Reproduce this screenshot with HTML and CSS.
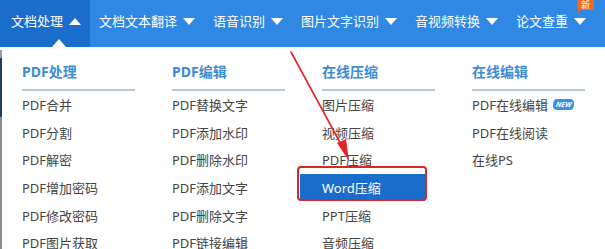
FILE: index.html
```html
<!DOCTYPE html>
<html lang="zh-CN">
<head>
<meta charset="utf-8">
<title>文档处理</title>
<link rel="stylesheet" href="styles.css">
</head>
<body>
<div class="page">
  <nav class="nav">
    <div class="nav-item active">文档处理<span class="caret up"></span><span class="pointer"></span></div>
    <div class="nav-item">文档文本翻译<span class="caret"></span></div>
    <div class="nav-item">语音识别<span class="caret"></span></div>
    <div class="nav-item">图片文字识别<span class="caret"></span></div>
    <div class="nav-item">音视频转换<span class="caret"></span></div>
    <div class="nav-item last">论文查重<span class="caret"></span><span class="badge-new">新</span></div>
  </nav>
  <div class="panel">
    <div class="col">
      <div class="col-title">PDF处理</div>
      <div class="item">PDF合并</div>
      <div class="item">PDF分割</div>
      <div class="item">PDF解密</div>
      <div class="item">PDF增加密码</div>
      <div class="item">PDF修改密码</div>
      <div class="item">PDF图片获取</div>
    </div>
    <div class="col">
      <div class="col-title">PDF编辑</div>
      <div class="item">PDF替换文字</div>
      <div class="item">PDF添加水印</div>
      <div class="item">PDF删除水印</div>
      <div class="item">PDF添加文字</div>
      <div class="item">PDF删除文字</div>
      <div class="item">PDF链接编辑</div>
    </div>
    <div class="col">
      <div class="col-title">在线压缩</div>
      <div class="item">图片压缩</div>
      <div class="item">视频压缩</div>
      <div class="item">PDF压缩</div>
      <div class="item selected">Word压缩</div>
      <div class="item">PPT压缩</div>
      <div class="item">音频压缩</div>
    </div>
    <div class="col">
      <div class="col-title">在线编辑</div>
      <div class="item">PDF在线编辑<span class="tag-new">NEW</span></div>
      <div class="item">PDF在线阅读</div>
      <div class="item">在线PS</div>
    </div>
    <div class="mark-box"></div>
    <svg class="mark-arrow" width="605" height="249" viewBox="0 0 605 249">
      <line x1="291" y1="52" x2="343" y2="148" stroke="#e0262a" stroke-width="1.6" stroke-linecap="round"/>
      <polygon points="349,161 337,143 346,139" fill="#e0262a"/>
    </svg>
  </div>
</div>
</body>
</html>
```

FILE: styles.css
```css
* { box-sizing: border-box; }
html, body { margin: 0; padding: 0; }
body {
  width: 605px;
  height: 249px;
  overflow: hidden;
  background: #ffffff;
  font-family: "Noto Sans", "Noto Sans CJK SC", sans-serif;
  font-size: 13px;
  color: #444444;
}
.page { position: relative; width: 605px; height: 249px; }

.nav {
  display: flex;
  height: 47px;
  background: #2e88e4;
  color: #ffffff;
}
.nav-item {
  position: relative;
  display: flex;
  align-items: center;
  height: 42px;
  padding: 0 9px;
  line-height: 42px;
  white-space: nowrap;
}
.nav-item.active {
  height: 47px;
  padding-left: 11px;
  padding-bottom: 5px;
  background: #1b6dcc;
}
.caret {
  display: block;
  width: 0;
  height: 0;
  margin-left: 6px;
  border-left: 6.5px solid transparent;
  border-right: 6.5px solid transparent;
  border-top: 7px solid #ffffff;
}
.caret.up {
  border-top: 0;
  border-bottom: 7px solid #ffffff;
}
.pointer {
  position: absolute;
  left: 52px;
  bottom: 0;
  width: 0;
  height: 0;
  border-left: 7px solid transparent;
  border-right: 7px solid transparent;
  border-bottom: 8px solid #ffffff;
}
.badge-new {
  position: absolute;
  top: -1px;
  right: 1px;
  width: 17px;
  height: 11px;
  border-radius: 2px;
  background: #f2691f;
  color: #ffffff;
  font-size: 9px;
  line-height: 11px;
  text-align: center;
}
.badge-new::after {
  content: "";
  position: absolute;
  left: 1px;
  bottom: -3px;
  border-left: 3px solid #f2691f;
  border-right: 2px solid transparent;
  border-bottom: 3px solid transparent;
}

.panel {
  position: relative;
  display: grid;
  grid-template-columns: 150px 150px 150px 150px;
  height: 202px;
  padding-top: 15px;
  background:
    linear-gradient(to bottom, #f2f7fc 0, #ffffff 3px) no-repeat 0 0 / 100% 3px,
    linear-gradient(to bottom, #9a9a9a 0 11px, #1d3d63 11px 70px, #8c8c8c 70px) no-repeat 0 0 / 2px 100%,
    #ffffff;
}
.col { display: flex; flex-direction: column; }
.col-title {
  width: 113px;
  margin-left: 22px;
  height: 29px;
  padding-bottom: 7px;
  line-height: 20px;
  font-size: 14px;
  font-weight: 700;
  color: #3d8cd2;
  border-bottom: 2px solid #b3c9dd;
}
.item {
  display: flex;
  align-items: center;
  width: 125px;
  height: 27.6px;
  padding-left: 22px;
  white-space: nowrap;
}
.item.selected {
  background: #1b6dcc;
  color: #ffffff;
}
.tag-new {
  display: inline-block;
  margin-left: 5px;
  padding: 0 3px;
  height: 11px;
  border-radius: 3px 5px 3px 5px;
  background: #3a92e2;
  color: #ffffff;
  font-size: 7px;
  font-weight: 700;
  font-style: italic;
  line-height: 11px;
  transform: skewX(-10deg);
}

.mark-box {
  position: absolute;
  left: 297px;
  top: 119px;
  width: 130px;
  height: 35px;
  border: 2px solid #d2282e;
  border-radius: 4px;
}
.mark-arrow {
  position: absolute;
  left: 0;
  top: -47px;
  pointer-events: none;
}
```
